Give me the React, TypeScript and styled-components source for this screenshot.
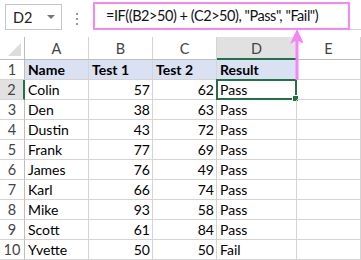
import React from 'react';
import styled, { createGlobalStyle, css } from 'styled-components';

const GlobalStyle = createGlobalStyle`
  html, body {
    margin: 0;
    padding: 0;
    background: #fff;
  }
  body {
    font-family: Lato, "Liberation Sans", sans-serif;
  }
`;

const Sheet = styled.div`
  position: relative;
  width: 361px;
  height: 260px;
  overflow: hidden;
  background: #fff;
  color: #000;
`;

const TopBar = styled.div`
  display: flex;
  align-items: flex-start;
  height: 37px;
  padding-top: 2px;
  box-sizing: border-box;
`;

const NameBox = styled.div`
  display: flex;
  align-items: center;
  justify-content: space-between;
  width: 57px;
  height: 26px;
  margin: 2px 0 0 5px;
  padding: 0 6px 0 7px;
  border: 1px solid #c6c6c6;
  box-sizing: border-box;
  font-size: 14.5px;
  color: #222;
`;

const Caret = styled.span`
  width: 0;
  height: 0;
  border-left: 4px solid transparent;
  border-right: 4px solid transparent;
  border-top: 4px solid #777;
`;

const Dots = styled.div`
  display: flex;
  flex-direction: column;
  gap: 3px;
  margin: 11px 0 0 14px;

  span {
    width: 2px;
    height: 2px;
    background: #999;
  }
`;

const FormulaBar = styled.div`
  flex: 1;
  display: flex;
  align-items: flex-start;
  margin-left: 15px;
  height: 28px;
  border-bottom: 1px solid #d4d4d4;
  box-sizing: border-box;
`;

const FormulaBox = styled.div`
  width: 257px;
  height: 28px;
  border: 2px solid #f488f4;
  box-sizing: border-box;
  padding: 0 0 0 11px;
  font-size: 14.5px;
  letter-spacing: -0.45px;
  line-height: 24px;
  color: #111;
  white-space: nowrap;
`;

const Grid = styled.div`
  display: grid;
  grid-template-columns: 25px 64px 64px 64px 80px 64px;
  grid-template-rows: 23px repeat(10, 20px);
  font-size: 14px;
`;

const Corner = styled.div`
  position: relative;
  border-right: 1px solid #bdbdbd;
  border-bottom: 1px solid #bdbdbd;
  box-sizing: border-box;

  &::after {
    content: '';
    position: absolute;
    right: 3px;
    bottom: 3px;
    width: 0;
    height: 0;
    border-left: 13px solid transparent;
    border-bottom: 13px solid #dcdcdc;
  }
`;

const ColHead = styled.div<{ $active?: boolean }>`
  display: flex;
  align-items: center;
  justify-content: center;
  color: #444;
  font-size: 14.5px;
  border-right: 1px solid #d4d4d4;
  border-bottom: 1px solid #bdbdbd;
  box-sizing: border-box;
  padding-top: 1px;
  ${(p) =>
    p.$active &&
    css`
      background: #e1e1e1;
      border-bottom: 2px solid #217346;
      padding-top: 2px;
    `}
`;

const RowHead = styled.div<{ $active?: boolean }>`
  display: flex;
  align-items: center;
  justify-content: center;
  color: #444;
  font-size: 14.5px;
  border-right: 1px solid #bdbdbd;
  border-bottom: 1px solid #d4d4d4;
  box-sizing: border-box;
  ${(p) =>
    p.$active &&
    css`
      background: #e1e1e1;
      border-right: 2px solid #217346;
    `}
`;

const Cell = styled.div<{ $num?: boolean; $head?: boolean; $selected?: boolean }>`
  position: relative;
  line-height: 19px;
  padding: 0 ${(p) => (p.$num ? '2px' : '3px')};
  text-align: ${(p) => (p.$num ? 'right' : 'left')};
  border-right: 1px solid #d4d4d4;
  border-bottom: 1px solid #d4d4d4;
  box-sizing: border-box;
  white-space: nowrap;
  ${(p) =>
    p.$head &&
    css`
      background: #d9e1f2;
      font-weight: 700;
    `}
  ${(p) =>
    p.$selected &&
    css`
      &::before {
        content: '';
        position: absolute;
        left: -1px;
        top: -1px;
        right: -1px;
        bottom: -1px;
        border: 2px solid #217346;
      }
      &::after {
        content: '';
        position: absolute;
        right: -3px;
        bottom: -3px;
        width: 5px;
        height: 5px;
        background: #217346;
        border: 1px solid #fff;
      }
    `}
`;

const Arrow = styled.svg`
  position: absolute;
  left: 289px;
  top: 29px;
`;

const rows: [string, number, number, string][] = [
  ['Colin', 57, 62, 'Pass'],
  ['Den', 38, 63, 'Pass'],
  ['Dustin', 43, 72, 'Pass'],
  ['Frank', 77, 69, 'Pass'],
  ['James', 76, 49, 'Pass'],
  ['Karl', 66, 74, 'Pass'],
  ['Mike', 93, 58, 'Pass'],
  ['Scott', 61, 84, 'Pass'],
  ['Yvette', 50, 50, 'Fail'],
];

export default function App() {
  return (
    <Sheet>
      <GlobalStyle />
      <TopBar>
        <NameBox>
          D2
          <Caret />
        </NameBox>
        <Dots>
          <span />
          <span />
          <span />
        </Dots>
        <FormulaBar>
          <FormulaBox>=IF((B2&gt;50) + (C2&gt;50), "Pass", "Fail")</FormulaBox>
        </FormulaBar>
      </TopBar>

      <Grid>
        <Corner />
        {['A', 'B', 'C', 'D', 'E'].map((c) => (
          <ColHead key={c} $active={c === 'D'}>
            {c}
          </ColHead>
        ))}

        <RowHead>1</RowHead>
        <Cell $head>Name</Cell>
        <Cell $head>Test 1</Cell>
        <Cell $head>Test 2</Cell>
        <Cell $head>Result</Cell>
        <Cell />

        {rows.map(([name, t1, t2, res], i) => (
          <React.Fragment key={name}>
            <RowHead $active={i === 0}>{i + 2}</RowHead>
            <Cell>{name}</Cell>
            <Cell $num>{t1}</Cell>
            <Cell $num>{t2}</Cell>
            <Cell $selected={i === 0}>{res}</Cell>
            <Cell />
          </React.Fragment>
        ))}
      </Grid>

      <Arrow width="14" height="52" viewBox="0 0 14 52">
        <line x1="8" y1="8" x2="8" y2="51" stroke="#f585f5" strokeWidth="3" />
        <polygon points="8,0 1,15 8,11 15,15" fill="#f585f5" />
      </Arrow>
    </Sheet>
  );
}
